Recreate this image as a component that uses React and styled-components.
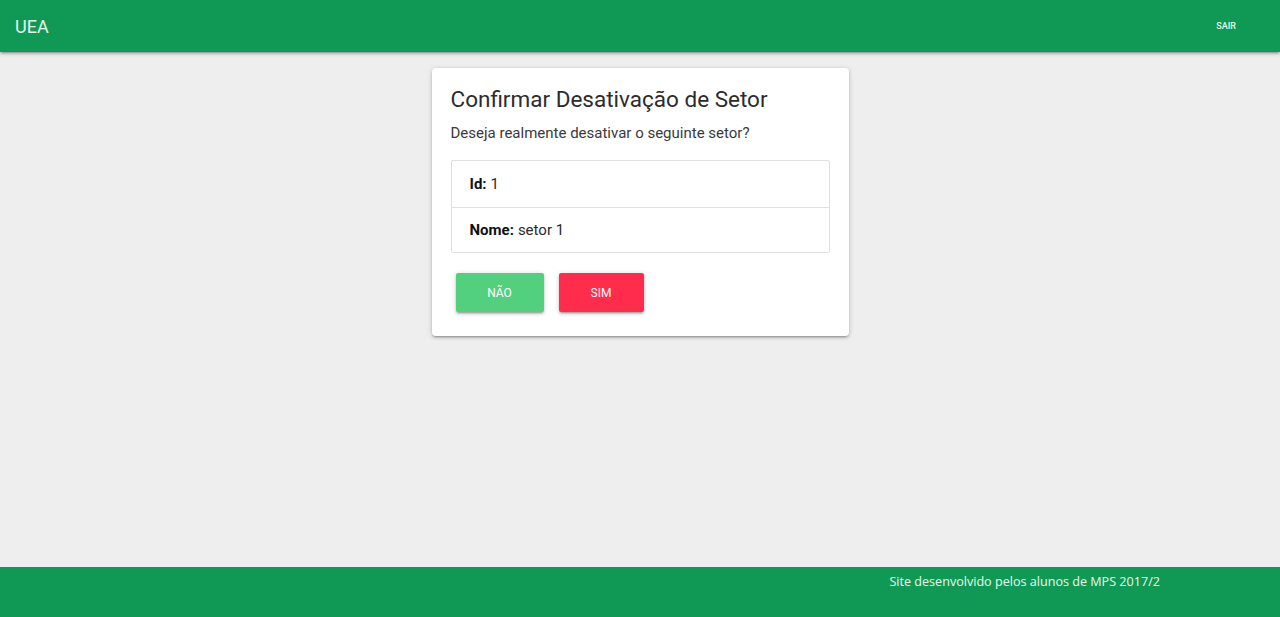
import React from "react";
import styled, { createGlobalStyle } from "styled-components";

const Global = createGlobalStyle`
  html, body { margin: 0; padding: 0; }
  body { background: #eeeeee; font-family: Roboto, "Noto Sans", sans-serif; color: rgba(0,0,0,0.87); }
  * { box-sizing: border-box; }
`;

const Page = styled.div`
  display: flex;
  flex-direction: column;
  min-height: 617px;
`;

const Nav = styled.nav`
  height: 52px;
  background: #0f9954;
  display: flex;
  align-items: center;
  justify-content: space-between;
  padding: 0 15px;
  box-shadow: 0 2px 2px 0 rgba(0,0,0,0.14), 0 3px 1px -2px rgba(0,0,0,0.12), 0 1px 5px 0 rgba(0,0,0,0.2);
  position: relative;
  z-index: 1;
`;

const Brand = styled.span`
  font-size: 18px;
  color: #e6fbe9;
`;

const NavLink = styled.a`
  font-size: 9px;
  font-weight: 500;
  color: #e6fbe9;
  margin-right: 29px;
  text-decoration: none;
`;

const Main = styled.main`
  flex: 1;
  display: flex;
  justify-content: center;
  align-items: flex-start;
  padding-top: 16px;
`;

const Card = styled.section`
  width: 417px;
  background: #fff;
  border-radius: 4px;
  padding: 16px 19px 24px;
  box-shadow: 0 2px 2px 0 rgba(0,0,0,0.14), 0 3px 1px -2px rgba(0,0,0,0.12), 0 1px 5px 0 rgba(0,0,0,0.2);
`;

const Title = styled.h4`
  margin: 0;
  font-size: 22.5px;
  font-weight: 400;
  line-height: 30px;
  color: #2c2c2c;
`;

const Lead = styled.p`
  margin: 9px 0 17px;
  font-size: 15px;
  line-height: 20px;
  color: #3a3a3a;
`;

const Collection = styled.ul`
  list-style: none;
  margin: 0;
  padding: 0;
  border: 1px solid #e0e0e0;
  border-radius: 2px;
`;

const Item = styled.li`
  height: 45.5px;
  display: flex;
  align-items: center;
  padding: 0 18px;
  font-size: 15px;
  color: #2a2a2a;
  & + & { border-top: 1px solid #e0e0e0; }
  b { font-weight: 700; color: #111; margin-right: 4px; }
`;

const Actions = styled.div`
  display: flex;
  gap: 15px;
  padding: 20px 5px 0;
`;

const Button = styled.button`
  height: 39px;
  width: ${p => p.$w}px;
  border: none;
  border-radius: 2px;
  background: ${p => p.$bg};
  color: #fff;
  font-family: Roboto, sans-serif;
  font-size: 12px;
  font-weight: 400;
  text-transform: uppercase;
  box-shadow: 0 2px 2px 0 rgba(0,0,0,0.14), 0 3px 1px -2px rgba(0,0,0,0.12), 0 1px 5px 0 rgba(0,0,0,0.2);
`;

const Footer = styled.footer`
  height: 50px;
  background: #0f9954;
  display: flex;
  justify-content: flex-end;
  padding: 6px 120px 0 0;
`;

const FooterText = styled.span`
  font-family: "Open Sans", "Noto Sans", sans-serif;
  font-weight: 400;
  font-size: 12.6px;
  color: #eafaee;
  line-height: 18px;
`;

export default function App() {
  return (
    <Page>
      <Global />
      <Nav>
        <Brand>UEA</Brand>
        <NavLink href="#">SAIR</NavLink>
      </Nav>
      <Main>
        <Card>
          <Title>Confirmar Desativação de Setor</Title>
          <Lead>Deseja realmente desativar o seguinte setor?</Lead>
          <Collection>
            <Item><b>Id:</b> 1</Item>
            <Item><b>Nome:</b> setor 1</Item>
          </Collection>
          <Actions>
            <Button $bg="#52d07e" $w={88}>Não</Button>
            <Button $bg="#ff2d4b" $w={85}>Sim</Button>
          </Actions>
        </Card>
      </Main>
      <Footer>
        <FooterText>Site desenvolvido pelos alunos de MPS 2017/2</FooterText>
      </Footer>
    </Page>
  );
}
